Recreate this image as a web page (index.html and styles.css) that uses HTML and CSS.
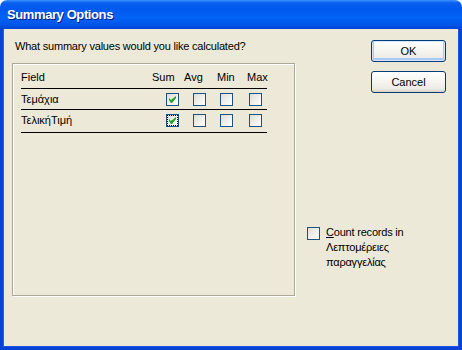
FILE: index.html
```html
<html>
<head>
    <link rel="stylesheet" href="styles.css">
</head>
<body>

<div class="window">

    <div class="titlebar">
        <span class="title">Summary Options</span>
    </div>

    <div class="client">

        <div class="main">
            <p class="prompt">What summary values would you like calculated?</p>

            <div class="panel">
                <div class="head-row">
                    <span>Field</span>
                    <span>Sum</span>
                    <span>Avg</span>
                    <span>Min</span>
                    <span>Max</span>
                </div>
                <div class="row first">
                    <span class="field">Τεμάχια</span>
                    <span class="check checked"></span>
                    <span class="check"></span>
                    <span class="check"></span>
                    <span class="check"></span>
                </div>
                <div class="row second">
                    <span class="field">ΤελικήΤιμή</span>
                    <span class="check checked focus"></span>
                    <span class="check"></span>
                    <span class="check"></span>
                    <span class="check"></span>
                </div>
            </div>
        </div>

        <div class="side">
            <button class="btn default">OK</button>
            <button class="btn">Cancel</button>

            <div class="count">
                <span class="check"></span>
                <span class="count-label"><u>C</u>ount records in<br>Λεπτομέρειες<br>παραγγελίας</span>
            </div>
        </div>

    </div>

</div>

</body>
</html>
```

FILE: styles.css
```css
body{
    margin: 0;
    background-color: #ffffff;
    font-family: "Liberation Sans", Arial, sans-serif;
    font-size: 11px;
    color: #000;
}
.window{
    width: 462px;
    height: 350px;
    display: flex;
    flex-direction: column;
}
.titlebar{
    height: 29px;
    border-radius: 7px 7px 0 0;
    background: linear-gradient(#3a93ff 0, #0a5fef 10%, #0058ee 30%, #0263f6 60%, #0056e9 85%, #0045d4 100%);
    padding-left: 7px;
    box-sizing: border-box;
}
.title{
    display: block;
    padding-top: 7px;
    color: #fff;
    font-weight: bold;
    font-size: 13px;
    line-height: 15px;
    letter-spacing: -0.4px;
    text-shadow: 1px 1px #0a1883;
}
.client{
    flex: 1;
    display: flex;
    background-color: #ece9d8;
    border: 3px solid #0842d6;
    border-top: none;
    box-shadow: inset 1px 0 #1f63f0, inset -1px -1px #1a54e0;
    padding: 11px 0 0 9px;
}
.main{
    width: 283px;
}
.prompt{
    margin: 0 0 10px 3px;
    line-height: 13px;
    letter-spacing: -0.2px;
}
.panel{
    height: 233px;
    box-sizing: border-box;
    border: 1px solid #aca899;
    box-shadow: inset 1px 1px #fff, 1px 1px #fff;
    padding: 7px 0 0 8px;
}
.head-row{
    width: 246px;
    height: 17px;
    display: grid;
    grid-template-columns: 131px 32px 33px 30px 1fr;
    line-height: 13px;
    border-bottom: 1px solid #000;
}
.row{
    width: 246px;
    display: grid;
    grid-template-columns: 145px 27px 27px 29px 1fr;
    align-items: start;
    border-bottom: 1px solid #000;
    padding-top: 4px;
    box-sizing: border-box;
}
.row.first{
    height: 21px;
}
.row.second{
    height: 23px;
}
.field{
    line-height: 13px;
}
.check{
    display: block;
    position: relative;
    width: 13px;
    height: 13px;
    box-sizing: border-box;
    border: 1px solid #1c5180;
    background: linear-gradient(135deg, #dcdcd7 0, #f2f2ef 60%, #ffffff 100%);
}
.check.checked::after{
    content: "";
    position: absolute;
    left: 2px;
    top: 2px;
    width: 7px;
    height: 7px;
    background: linear-gradient(#21a121, #21a121);
    clip-path: polygon(100% 0, 100% 28%, 43% 100%, 28% 100%, 0 57%, 0 28%, 28% 57%);
}
.check.focus{
    outline: 1px dotted #000;
    outline-offset: -2px;
}
.side{
    flex: 1;
    display: flex;
    flex-direction: column;
    align-items: flex-end;
    padding-right: 13px;
}
.btn{
    width: 75px;
    height: 22px;
    margin: 0 0 9px 0;
    padding: 0;
    font-family: "Liberation Sans", Arial, sans-serif;
    font-size: 11px;
    color: #000;
    border: 1px solid #003c74;
    border-radius: 3px;
    background: linear-gradient(#ffffff 0, #f5f4ef 50%, #ecebe5 85%, #d6d0c5 100%);
}
.btn.default{
    box-shadow: inset 0 0 0 1px #cee7ff, inset 0 -1px 0 2px #a9c8f5;
}
.count{
    align-self: flex-start;
    margin-top: 123px;
    padding-left: 12px;
    display: flex;
    align-items: flex-start;
}
.count .check{
    margin-top: 2px;
}
.count-label{
    margin-left: 6px;
    line-height: 15px;
    letter-spacing: -0.2px;
}
```
